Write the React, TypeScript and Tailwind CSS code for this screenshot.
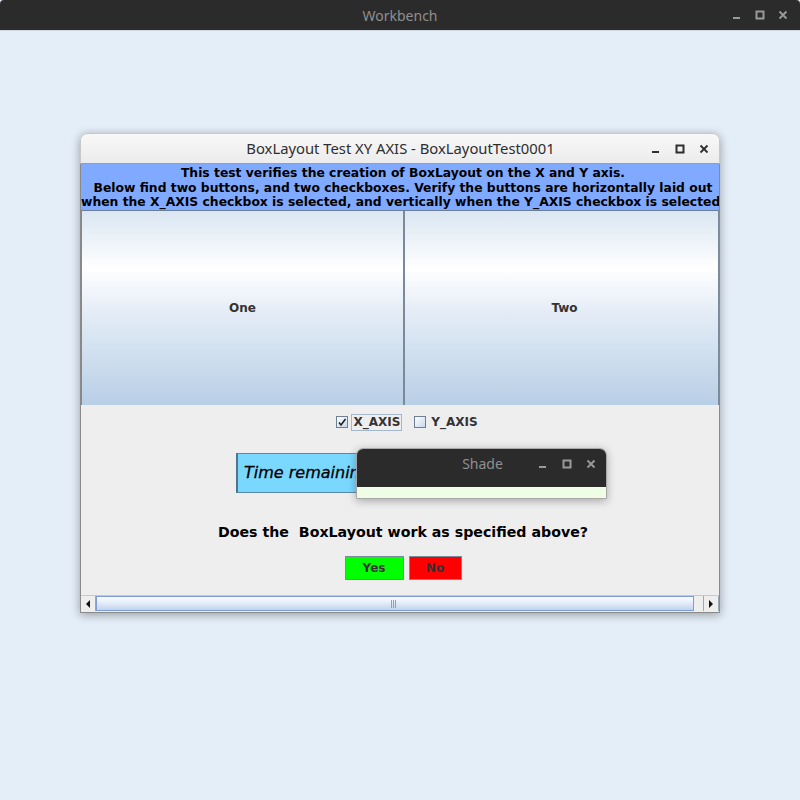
import React from "react";

const WinIcons = ({ color, gap }: { color: string; gap: string }) => (
  <div className={`flex items-center ${gap}`}>
    <svg width="10" height="10" viewBox="0 0 10 10">
      <rect x="1" y="7" width="7" height="2" fill={color} />
    </svg>
    <svg width="10" height="10" viewBox="0 0 10 10">
      <rect x="1.5" y="1.5" width="7" height="7" fill="none" stroke={color} strokeWidth="2" />
    </svg>
    <svg width="10" height="10" viewBox="0 0 10 10">
      <path d="M1.5 1.5 L8.5 8.5 M8.5 1.5 L1.5 8.5" stroke={color} strokeWidth="1.8" />
    </svg>
  </div>
);

export default function App() {
  const dv = { fontFamily: '"DejaVu Sans", sans-serif' };
  return (
    <div className="w-[800px] h-[800px] bg-[#e4eef8] flex flex-col relative" style={{ fontFamily: '"Noto Sans", sans-serif' }}>
      {/* Top bar */}
      <div className="h-[30px] bg-[#2b2b2b] relative flex items-center justify-center rounded-t-[4px]">
        <span className="text-[14px] text-[#8f8f8f]">Workbench</span>
        <div className="absolute right-[12px] top-[10px]">
          <WinIcons color="#9a9a9a" gap="gap-[13px]" />
        </div>
      </div>
      <div className="h-px bg-[#cfd8e0]" />

      {/* Desktop */}
      <div className="flex-1 pl-[80px] pt-[102px]">
        <div className="w-[640px] h-[480px] flex flex-col rounded-t-[7px] shadow-[0_2px_10px_rgba(0,0,0,0.35)] bg-[#eeeeee]">
          {/* title bar */}
          <div className="h-[31px] rounded-t-[7px] bg-gradient-to-b from-[#f8f8f8] to-[#ececec] border border-[#c8c8c8] border-b-[#9e9e9e] relative flex items-center justify-center">
            <span className="text-[14.8px] text-[#2e2e2e] pl-[1px]">BoxLayout Test XY AXIS - BoxLayoutTest0001</span>
            <div className="absolute right-[10px] top-[10px]">
              <WinIcons color="#2e2e2e" gap="gap-[14px]" />
            </div>
          </div>
          {/* content */}
          <div className="flex-1 flex flex-col border-x border-b border-[#8a8a8a] bg-[#eeeeee]">
            {/* header */}
            <div className="h-[47px] bg-[#80aaff] overflow-hidden border-b border-[#6a7e98]" style={dv}>
              <div className="w-max text-center font-bold text-[12.35px] leading-[14.5px] text-black pt-[2px]">
                <div>This test verifies the creation of BoxLayout on the X and Y axis.</div>
                <div>Below find two buttons, and two checkboxes. Verify the buttons are horizontally laid out</div>
                <div>when the X_AXIS checkbox is selected, and vertically when the Y_AXIS checkbox is selected.</div>
              </div>
            </div>
            {/* buttons */}
            <div className="h-[194px] flex" style={dv}>
              <div className="w-[323px] border-x border-[#7a8a9a] bg-[linear-gradient(to_bottom,#dae6f2_0%,#ffffff_30%,#e6eef7_50%,#b8cfe6_100%)] flex items-center justify-center text-[12px] font-bold text-[#333]">
                One
              </div>
              <div className="flex-1 border-x border-[#7a8a9a] bg-[linear-gradient(to_bottom,#dae6f2_0%,#ffffff_30%,#e6eef7_50%,#b8cfe6_100%)] flex items-center justify-center text-[12px] font-bold text-[#333] pl-[6px]">
                Two
              </div>
            </div>
            {/* checkboxes */}
            <div className="h-[34px] flex items-center justify-center gap-[6px] pl-[14px]" style={dv}>
              <div className="flex items-center gap-[3px]">
                <div className="w-[12px] h-[12px] border border-[#6e7f94] bg-gradient-to-br from-[#ffffff] to-[#c7d8ea] flex items-center justify-center">
                  <svg width="10" height="10" viewBox="0 0 10 10">
                    <path d="M2 5.5 L4 8 L8.5 2" stroke="#222" strokeWidth="1.6" fill="none" />
                  </svg>
                </div>
                <span className="text-[12px] font-bold text-[#333] border border-[#a3b8cc] px-[1px] leading-[15px]">X_AXIS</span>
              </div>
              <div className="flex items-center gap-[5px] ml-[6px]">
                <div className="w-[12px] h-[12px] border border-[#6e7f94] bg-gradient-to-br from-[#ffffff] to-[#c7d8ea]" />
                <span className="text-[12px] font-bold text-[#333]">Y_AXIS</span>
              </div>
            </div>
            {/* time remaining */}
            <div className="h-[14px]" />
            <div className="flex pl-[155px]">
              <div className="w-[200px] h-[40px] bg-[#7ad8ff] border border-[#5a8aa8] border-l-[2px] border-l-[#4d7590] flex items-center pl-[6px]" style={dv}>
                <span className="text-[16px] italic text-black whitespace-nowrap [-webkit-text-stroke:0.3px_black]">Time remaining</span>
              </div>
            </div>
            {/* question */}
            <div className="h-[79px] flex flex-col items-center" style={dv}>
              <div className="mt-[29px] text-[14.2px] font-bold text-black pl-[6px] whitespace-pre">Does the  BoxLayout work as specified above?</div>
              <div className="mt-[13px] flex gap-[5px] pl-[6px]">
                <div className="w-[59px] h-[24px] bg-[#00ff00] border border-[#7a8a9a] flex items-center justify-center text-[12px] font-bold text-[#333]">Yes</div>
                <div className="w-[53px] h-[24px] bg-[#ff0000] border border-[#7a8a9a] flex items-center justify-center text-[12px] font-bold text-[#333]">No</div>
              </div>
            </div>
            <div className="flex-1" />
            {/* scrollbar */}
            <div className="h-[16px] flex border-t border-[#c8c8c8] bg-[#eeeeee] mb-[1px]">
              <div className="w-[15px] border-r border-[#9aa8b8] flex items-center justify-center">
                <svg width="6" height="8" viewBox="0 0 6 8"><path d="M5 0 L1 4 L5 8 Z" fill="#111" /></svg>
              </div>
              <div className="w-[598px] border border-[#7e9cd6] bg-[linear-gradient(to_bottom,#f8fbff_0%,#e8f0fa_40%,#c0d4ea_100%)] flex items-center justify-center">
                <div className="flex gap-[1px] pr-[4px]">
                  <div className="w-[1px] h-[8px] bg-[#8aa0c0]" />
                  <div className="w-[1px] h-[8px] bg-[#8aa0c0]" />
                  <div className="w-[1px] h-[8px] bg-[#8aa0c0]" />
                </div>
              </div>
              <div className="flex-1 border-r border-[#9aa8b8]" />
              <div className="w-[15px] border-r border-[#9aa8b8] flex items-center justify-center">
                <svg width="6" height="8" viewBox="0 0 6 8"><path d="M1 0 L5 4 L1 8 Z" fill="#111" /></svg>
              </div>
            </div>
          </div>
        </div>
      </div>

      {/* Shade window */}
      <div className="absolute left-[356px] top-[448px] w-[251px] h-[51px] flex flex-col rounded-t-[7px] border border-[#a8a8a8] shadow-[0_2px_8px_rgba(0,0,0,0.3)]">
        <div className="h-[38px] bg-[#2b2b2b] rounded-t-[6px] relative flex justify-center pt-[4px]">
          <span className="text-[14px] text-[#8f8f8f] pl-[2px]">Shade</span>
          <div className="absolute right-[10px] top-[10px]">
            <WinIcons color="#9a9a9a" gap="gap-[14px]" />
          </div>
        </div>
        <div className="flex-1 bg-[#f0fde6]" />
      </div>
    </div>
  );
}
